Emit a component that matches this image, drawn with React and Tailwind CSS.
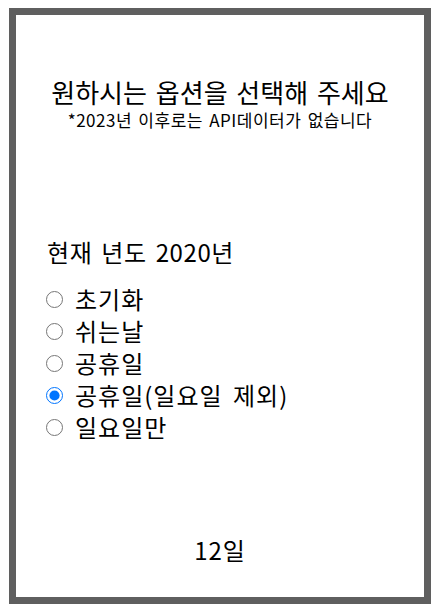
import React from "react";

const options = ["초기화", "쉬는날", "공휴일", "공휴일(일요일 제외)", "일요일만"];

export default function App() {
  return (
    <div className="pt-[8px] pl-[9px] bg-white" style={{ fontFamily: '"Noto Sans CJK KR", "Noto Sans", sans-serif' }}>
      <div className="w-[422px] h-[596px] border-[7px] border-[#5f5f5f] bg-white flex flex-col text-black">
        <div className="pt-[62px] text-center">
          <div className="text-[26px] leading-[30px] [word-spacing:3px]">원하시는 옵션을 선택해 주세요</div>
          <div className="mt-[2px] text-[17px] leading-[22px] tracking-[0.5px] [word-spacing:2px]">*2023년 이후로는 API데이터가 없습니다</div>
        </div>
        <div className="mt-[105px] pl-[31px] text-[24px] leading-[32px] tracking-[0.6px] [word-spacing:3px]">현재 년도 2020년</div>
        <div className="mt-[15px] pl-[30px] flex flex-col">
          {options.map((o, i) => (
            <label key={o} className="h-[32px] flex items-center gap-[12px] text-[24px] tracking-[1px] [word-spacing:4px]">
              <input type="radio" name="opt" defaultChecked={i === 3} className="m-0 w-[17px] h-[17px]" />
              <span>{o}</span>
            </label>
          ))}
        </div>
        <div className="mt-[91px] text-center text-[24px] leading-[32px] tracking-[1px]">12일</div>
      </div>
    </div>
  );
}
